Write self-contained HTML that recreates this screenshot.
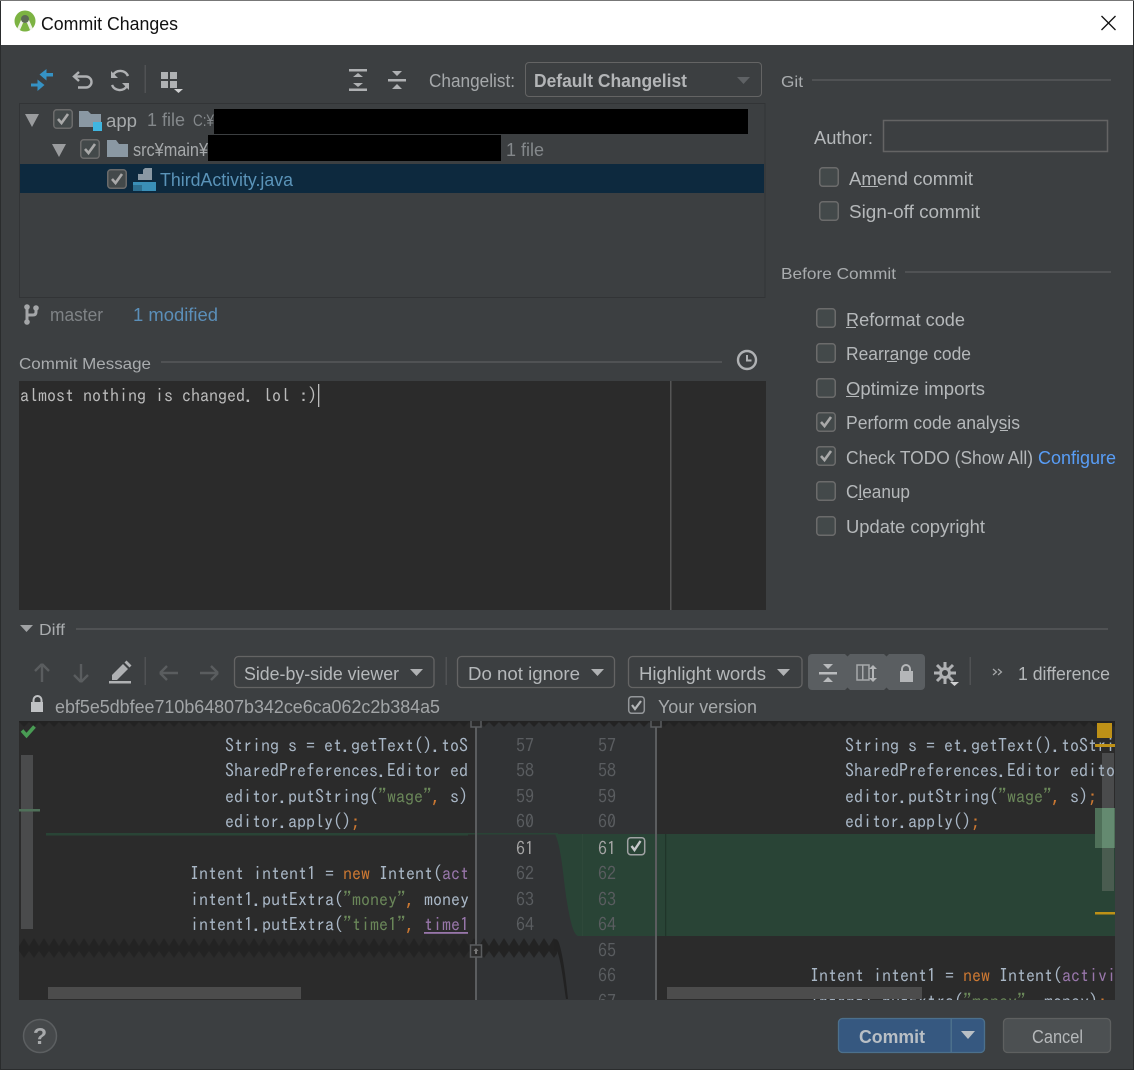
<!DOCTYPE html>
<html><head><meta charset="utf-8"><title>Commit Changes</title>
<style>
html,body{margin:0;padding:0;background:#3c3f41;width:1134px;height:1070px;overflow:hidden}
svg{display:block}
text{font-family:"Liberation Sans","Noto Sans CJK JP",sans-serif;font-size:18px;fill:#b5b8ba;white-space:pre}
.s{font-size:16px;fill:#a9acae}
.g{fill:#84888b}
.m{font-family:"IPAGothic","Liberation Mono",monospace;font-size:18px;fill:#a9b7c6}
.n{font-family:"IPAGothic","Liberation Mono",monospace;font-size:18px;fill:#5a5d60}
.o{fill:#cc7832}.v{fill:#6a8759}.p{fill:#9876aa}
.cb{fill:#43494a;stroke:#6b6b6b;stroke-width:1.5}
.ck{fill:none;stroke:#a9a9a9;stroke-width:2.6}
.ic{fill:#afb1b3}
.il{fill:none;stroke:#afb1b3;stroke-width:2.4}
.d{fill:#6e7275}
</style></head><body>
<svg width="1134" height="1070" viewBox="0 0 1134 1070" xmlns="http://www.w3.org/2000/svg">
<defs>
<pattern id="zt" x="19" y="721" width="10" height="7" patternUnits="userSpaceOnUse"><polygon points="0,0 10,0 10,1 5,6 0,1" fill="#232323"/></pattern>
<pattern id="zm" x="19" y="938" width="10" height="20" patternUnits="userSpaceOnUse"><polygon points="0,8 5,0 10,8 10,13 5,20 0,13" fill="#232323"/></pattern>
<clipPath id="cl"><rect x="19" y="721" width="449" height="279"/></clipPath>
<clipPath id="cr"><rect x="657" y="721" width="458" height="279"/></clipPath>
<clipPath id="cg"><rect x="476" y="721" width="180" height="279"/></clipPath>
<g id="c"><rect x="0.75" y="0.75" width="18.5" height="18.5" rx="3" class="cb"/></g>
<g id="cc"><rect x="0.75" y="0.75" width="18.5" height="18.5" rx="3" class="cb"/><path d="M5 10l3.5 4L15 5" class="ck"/></g>
</defs>

<rect width="1134" height="1070" fill="#3c3f41"/>
<!-- title bar -->
<rect x="0" y="0" width="1134" height="45" fill="#fff"/>
<circle cx="25" cy="21" r="10.5" fill="#7cb342"/>
<path d="M17 29l4-9h8l4 9-3 1-3-7h-4l-3 7z" fill="#eef3e6"/>
<circle cx="25" cy="19" r="4" fill="#5d6b55"/>
<text x="41" y="30" style="fill:#111" textLength="137" lengthAdjust="spacingAndGlyphs">Commit Changes</text>
<path d="M1101.500 16l14 14M1115.500 16l-14 14" stroke="#111" stroke-width="1.300" fill="none"/>

<!-- top toolbar -->
<path d="M53 73h-6.500v-4l-7 5.500 4 3.500 3 2.500v-4H53z" fill="#3592c4"/>
<path d="M31 83.500h6.500v-4l7 5.500-7 6v-4.500H31z" fill="#3592c4"/>
<path d="M79 72l-5 4.500 5 4.500M74 76.500h12a4.800 4.800 0 0 1 0 11h-8" class="il"/>
<path d="M128 76a8.500 8.500 0 0 0-15-1M112 85a8.500 8.500 0 0 0 15 1" class="il"/>
<path d="M111 71v7h7zM129 90v-7h-7z" class="ic"/>
<rect x="144.500" y="65" width="1.500" height="28" fill="#505254"/>
<path d="M161 72h7v7h-7zM170 72h7v7h-7zM161 81h7v7h-7zM170 81h7v7h-7z" class="ic"/>
<path d="M174 89h9l-4.500 4z" fill="#cfd0d1"/>
<path d="M349 69h18v2.500h-18zM349 88.500h18v2.500h-18zM358 73l5 4h-10zM358 87l5-4h-10z" class="ic"/>
<path d="M388 79h18v2.500h-18zM392 71h10l-5 5zM397 84l5 5h-10z" class="ic"/>
<text x="429" y="87" textLength="86" lengthAdjust="spacingAndGlyphs" style="fill:#a6a9ab">Changelist:</text>
<rect x="525.500" y="62.500" width="236" height="34" rx="3.500" fill="#3c3f41" stroke="#646464"/>
<text x="534" y="87" textLength="153" lengthAdjust="spacingAndGlyphs" style="font-weight:bold;fill:#b3b5b7">Default Changelist</text>
<path d="M737 77h13l-6.500 7z" fill="#5f6265"/>

<!-- tree -->
<rect x="19.500" y="103.500" width="745.500" height="194" fill="#3c3f41" stroke="#323436"/>
<rect x="20" y="164" width="744" height="29" fill="#0d293e"/>
<path d="M25 114h14l-7 13zM52 144h14l-7 13z" fill="#9a9c9e"/>
<use href="#cc" x="53" y="109"/><use href="#cc" x="80" y="139"/><use href="#cc" x="107" y="169"/>
<path d="M79 111h9l3 3h10v13H79z" fill="#8a98a3"/>
<rect x="93" y="122" width="9" height="9" fill="#40b6e0"/>
<path d="M107 140h9l3 4h9v13h-21z" fill="#8a98a3"/>
<path d="M145 168h7v12h-14v-6z" fill="#8a98a3"/><path d="M138 174l5-5v5z" fill="#0d293e"/>
<rect x="133" y="182" width="23" height="9" fill="#3a8fb7"/>
<rect x="133" y="185" width="9" height="6" fill="#2d6f90"/>
<text x="106" y="127" textLength="31" lengthAdjust="spacingAndGlyphs" style="fill:#a6a9ab">app</text>
<text x="147" y="126" textLength="38" lengthAdjust="spacingAndGlyphs" class="g">1 file</text>
<text x="193" y="126" textLength="21" lengthAdjust="spacingAndGlyphs" class="g" style="font-size:17px">C:¥</text>
<rect x="214" y="109" width="534" height="25" fill="#000"/>
<text x="133" y="156" textLength="75" lengthAdjust="spacingAndGlyphs" style="fill:#a6a9ab">src¥main¥</text>
<rect x="208" y="135" width="293" height="26" fill="#000"/>
<text x="506" y="156" textLength="38" lengthAdjust="spacingAndGlyphs" class="g">1 file</text>
<text x="160" y="186" textLength="133" lengthAdjust="spacingAndGlyphs" style="fill:#5a93b8">ThirdActivity.java</text>

<!-- status -->
<path d="M27 306v17M27 315h6q3 0 3-3v-4" fill="none" stroke="#a4a6a8" stroke-width="3"/>
<circle cx="27" cy="307" r="2.800" fill="#a4a6a8"/><circle cx="27" cy="322" r="2.800" fill="#a4a6a8"/><circle cx="36" cy="308" r="2.800" fill="#a4a6a8"/>
<text x="50" y="321" textLength="53" lengthAdjust="spacingAndGlyphs" style="fill:#7f8386">master</text>
<text x="133" y="321" textLength="85" lengthAdjust="spacingAndGlyphs" style="fill:#5b8fb9">1 modified</text>

<!-- commit message -->
<text x="19" y="369" textLength="132" lengthAdjust="spacingAndGlyphs" class="s">Commit Message</text>
<rect x="161" y="361" width="561" height="2" fill="#505254"/>
<circle cx="747" cy="360" r="9" fill="none" stroke="#afb1b3" stroke-width="2.400"/>
<path d="M747 355v5.500h4.500" fill="none" stroke="#afb1b3" stroke-width="2"/>
<rect x="19" y="381" width="747" height="229" fill="#2b2b2b"/>
<rect x="670" y="381" width="1.500" height="229" fill="#555"/>
<text x="20" y="402" class="m" style="fill:#bbb">almost nothing is changed. lol :)</text>
<rect x="318" y="384" width="1.300" height="23" fill="#bbb"/>

<!-- right panel -->
<text x="781" y="87" textLength="22" lengthAdjust="spacingAndGlyphs" class="s">Git</text>
<rect x="812" y="79" width="299" height="2" fill="#505254"/>
<text x="814" y="144" textLength="59" lengthAdjust="spacingAndGlyphs">Author:</text>
<rect x="883.500" y="120.500" width="224" height="31" fill="#3c3f41" stroke="#646464" stroke-width="1.500"/>
<use href="#c" x="819" y="167"/>
<text x="849" y="185" textLength="124" lengthAdjust="spacingAndGlyphs">Amend commit</text>
<rect x="861" y="186" width="17" height="1" fill="#b5b8ba"/>
<use href="#c" x="819" y="201"/>
<text x="849" y="218" textLength="131" lengthAdjust="spacingAndGlyphs">Sign-off commit</text>
<text x="781" y="279" textLength="115" lengthAdjust="spacingAndGlyphs" class="s">Before Commit</text>
<rect x="905" y="271" width="206" height="2" fill="#505254"/>

<use href="#c" x="816" y="308"/>
<text x="846" y="326" textLength="119" lengthAdjust="spacingAndGlyphs">Reformat code</text><rect x="846" y="327" width="10" height="1" fill="#b5b8ba"/>
<use href="#c" x="816" y="343"/>
<text x="846" y="360" textLength="125" lengthAdjust="spacingAndGlyphs">Rearrange code</text><rect x="887" y="361" width="10" height="1" fill="#b5b8ba"/>
<use href="#c" x="816" y="378"/>
<text x="846" y="395" textLength="139" lengthAdjust="spacingAndGlyphs">Optimize imports</text><rect x="846" y="396" width="13" height="1" fill="#b5b8ba"/>
<use href="#cc" x="816" y="412"/>
<text x="846" y="429" textLength="174" lengthAdjust="spacingAndGlyphs">Perform code analysis</text><rect x="1000" y="430" width="8" height="1" fill="#b5b8ba"/>
<use href="#cc" x="816" y="446"/>
<text x="846" y="464" textLength="187" lengthAdjust="spacingAndGlyphs">Check TODO (Show All)</text>
<text x="1038" y="464" textLength="78" lengthAdjust="spacingAndGlyphs" style="fill:#589df6">Configure</text>
<use href="#c" x="816" y="481"/>
<text x="846" y="498" textLength="64" lengthAdjust="spacingAndGlyphs">Cleanup</text><rect x="858" y="499" width="5" height="1" fill="#b5b8ba"/>
<use href="#c" x="816" y="516"/>
<text x="846" y="533" textLength="139" lengthAdjust="spacingAndGlyphs">Update copyright</text>

<!-- diff header -->
<path d="M20 625h13l-6.500 7z" fill="#a0a2a4"/>
<text x="39" y="635" textLength="26" lengthAdjust="spacingAndGlyphs" class="s">Diff</text>
<rect x="76" y="628" width="1032" height="2" fill="#505254"/>

<!-- diff toolbar -->
<path d="M42 664l-7 7M42 664l7 7M42 664v18" fill="none" stroke="#5a5d5f" stroke-width="2.400"/>
<path d="M81 682l-7-7M81 682l7-7M81 682v-18" fill="none" stroke="#5a5d5f" stroke-width="2.400"/>
<path d="M112 675l11-11 5 5-11 11h-5z" fill="#afb1b3"/><path d="M124.500 662.500l2-2 5 5-2 2z" fill="#afb1b3"/><rect x="109" y="681" width="22" height="2.500" fill="#afb1b3"/>
<rect x="144.500" y="657" width="1.500" height="28" fill="#505254"/>
<path d="M160 673h18M160 673l7-7M160 673l7 7" fill="none" stroke="#5a5d5f" stroke-width="2.400"/>
<path d="M200 673h18M218 673l-7-7M218 673l-7 7" fill="none" stroke="#5a5d5f" stroke-width="2.400"/>
<rect x="234.500" y="656.500" width="199.500" height="31" rx="4" fill="#3c3f41" stroke="#646464" stroke-width="1.300"/>
<text x="244" y="680" textLength="155" lengthAdjust="spacingAndGlyphs">Side-by-side viewer</text>
<path d="M410 669h13l-6.500 7z" fill="#afb1b3"/>
<rect x="445.500" y="657" width="1.500" height="28" fill="#505254"/>
<rect x="457.500" y="656.500" width="157" height="31" rx="4" fill="#3c3f41" stroke="#646464" stroke-width="1.300"/>
<text x="468" y="680" textLength="112" lengthAdjust="spacingAndGlyphs">Do not ignore</text>
<path d="M591 669h13l-6.500 7z" fill="#afb1b3"/>
<rect x="628.500" y="656.500" width="173.500" height="31" rx="4" fill="#3c3f41" stroke="#646464" stroke-width="1.300"/>
<text x="639" y="680" textLength="127" lengthAdjust="spacingAndGlyphs">Highlight words</text>
<path d="M777 669h13l-6.500 7z" fill="#afb1b3"/>
<rect x="808" y="654" width="117" height="36" rx="4" fill="#5a5e61"/>
<path d="M845 654h5l-2.500 2.500zM884 654h5l-2.500 2.500zM845 690h5l-2.500-2.500zM884 690h5l-2.500-2.500z" fill="#3c3f41"/>
<path d="M819 672h18v2.500h-18zM823 664h10l-5 5zM828 677l5 5h-10z" fill="#b9bbbd"/>
<rect x="857" y="665" width="12" height="15" fill="none" stroke="#a6a8aa" stroke-width="1.500"/><rect x="862" y="665" width="1.500" height="15" fill="#a6a8aa"/>
<path d="M873 665l-4 4h3v9h-3l4 4 4-4h-3v-9h3z" fill="#b4b6b8"/>
<path d="M902 672v-3a4 4 0 0 1 8 0v3" fill="none" stroke="#b4b6b8" stroke-width="2"/><rect x="900" y="671" width="13" height="11" fill="#b4b6b8"/>
<path d="M945 662v22M934 673h22M937 665l16 16M953 665l-16 16" stroke="#afb1b3" stroke-width="3"/>
<circle cx="945" cy="673" r="6" fill="#afb1b3"/><circle cx="945" cy="673" r="3" fill="#3c3f41"/>
<path d="M950 682h9l-4.500 4z" fill="#d0d1d2"/>
<rect x="969.500" y="657" width="1.500" height="28" fill="#505254"/>
<path d="M993 669l3.500 3-3.500 3M998 669l3.500 3-3.500 3" fill="none" stroke="#a6a8aa" stroke-width="1.200"/>
<text x="1018" y="680" textLength="92" lengthAdjust="spacingAndGlyphs">1 difference</text>

<path d="M33.500 703v-3a4 4 0 0 1 8 0v3" fill="none" stroke="#c0c2c4" stroke-width="2"/><rect x="31" y="702" width="12" height="10" fill="#c0c2c4"/>
<text x="55" y="713" textLength="385" lengthAdjust="spacingAndGlyphs" style="fill:#a2a5a7">ebf5e5dbfee710b64807b342ce6ca062c2b384a5</text>
<rect x="628.700" y="696.700" width="15.600" height="16.600" rx="3" fill="none" stroke="#94979a" stroke-width="1.500"/><path d="M632 705l3 4 6-8" class="ck" style="stroke:#b4b6b8;stroke-width:2.200"/>
<text x="658" y="713" textLength="99" lengthAdjust="spacingAndGlyphs" style="fill:#a6a9ab">Your version</text>

<!-- diff editors -->
<rect x="19" y="721" width="1096" height="279" fill="#2b2b2b"/>
<rect x="476" y="721" width="180" height="279" fill="#313335"/>
<rect x="19" y="721" width="1096" height="7" fill="url(#zt)"/>
<rect x="19" y="938" width="538" height="20" fill="url(#zm)"/>

<!-- green -->
<rect x="46" y="833" width="422" height="2.500" fill="#294436"/>
<rect x="468" y="833" width="90" height="1.500" fill="#294436"/>
<path d="M555 834h560v102H578c-5-2-8-15-12-40-3-22-5-50-11-62z" fill="#294436"/>
<rect x="665" y="834" width="1.300" height="102" fill="#20352a"/>
<rect x="582" y="834" width="0.800" height="102" fill="#2f4a3c"/>
<path d="M554 940c2-2 4 0 5 3 4 12 7 36 9 56h-2c-3-20-5-38-9-48l-3-1z" fill="#222"/>

<!-- markers beneath text -->
<rect x="21" y="755" width="12" height="174" fill="#4a4b4c"/>
<rect x="19" y="809" width="21" height="2.500" fill="#4f7059"/>
<rect x="1102" y="753" width="12" height="137" fill="#4a4b4c"/>
<rect x="1095" y="808" width="20" height="40" fill="#4f7059"/>
<rect x="1102" y="808" width="12" height="40" fill="#648a70"/>
<rect x="1102" y="848" width="12" height="43" fill="#4a5c50"/>

<!-- left code -->
<g clip-path="url(#cl)">
<text x="225" y="752" class="m">String s = et.getText().toS</text>
<text x="225" y="777" class="m">SharedPreferences.Editor ed</text>
<text x="225" y="803" class="m">editor.putString(<tspan class="v">"wage"</tspan><tspan class="o">,</tspan> s)</text>
<text x="225" y="828" class="m">editor.apply()<tspan class="o">;</tspan></text>
<text x="190" y="880" class="m">Intent intent1 = <tspan class="o">new</tspan> Intent(<tspan class="p">act</tspan></text>
<text x="190" y="906" class="m">intent1.putExtra(<tspan class="v">"money"</tspan><tspan class="o">,</tspan> money</text>
<text x="190" y="931" class="m">intent1.putExtra(<tspan class="v">"time1"</tspan><tspan class="o">,</tspan> <tspan class="p" text-decoration="underline">time1</tspan></text>
</g>
<!-- gutter numbers -->
<g clip-path="url(#cg)">
<text x="516" y="752" class="n">57</text><text x="598" y="752" class="n">57</text>
<text x="516" y="777" class="n">58</text><text x="598" y="777" class="n">58</text>
<text x="516" y="803" class="n">59</text><text x="598" y="803" class="n">59</text>
<text x="516" y="828" class="n">60</text><text x="598" y="828" class="n">60</text>
<text x="516" y="855" class="n" style="fill:#a4a4a4">61</text><text x="598" y="855" class="n" style="fill:#a4a4a4">61</text>
<text x="516" y="880" class="n">62</text><text x="598" y="880" class="n">62</text>
<text x="516" y="906" class="n">63</text><text x="598" y="906" class="n">63</text>
<text x="516" y="931" class="n">64</text><text x="598" y="931" class="n">64</text>
<text x="598" y="957" class="n">65</text>
<text x="598" y="982" class="n">66</text>
<text x="598" y="1008" class="n">67</text>
</g>
<rect x="627.700" y="837.700" width="17" height="17" rx="3" fill="none" stroke="#a0a2a4" stroke-width="1.500"/>
<path d="M631.500 846l3 4 6-9" class="ck" style="stroke:#c6c8ca;stroke-width:2.400"/>

<!-- right code -->
<g clip-path="url(#cr)">
<text x="845" y="752" class="m">String s = et.getText().toStri</text>
<text x="845" y="777" class="m">SharedPreferences.Editor edito</text>
<text x="845" y="803" class="m">editor.putString(<tspan class="v">"wage"</tspan><tspan class="o">,</tspan> s)<tspan class="o">;</tspan></text>
<text x="845" y="828" class="m">editor.apply()<tspan class="o">;</tspan></text>
<text x="810" y="982" class="m">Intent intent1 = <tspan class="o">new</tspan> Intent(<tspan class="p">activi</tspan></text>
<text x="810" y="1008" class="m">intent1.putExtra(<tspan class="v">"money"</tspan><tspan class="o">,</tspan> money)<tspan class="o">;</tspan></text>
</g>

<!-- dividers and fold boxes -->
<rect x="475" y="721" width="2" height="279" fill="#5b5d5f"/>
<rect x="655" y="721" width="2" height="279" fill="#5b5d5f"/>
<path d="M471 721v6h10v-6M651 721v6h10v-6" fill="#2b2b2b" stroke="#5b5d5f" stroke-width="1.500"/>
<rect x="470.500" y="945" width="11" height="12" fill="#2b2b2b" stroke="#5b5d5f" stroke-width="1.500"/>
<path d="M476 948l2.500 3h-1.500v3h-2v-3h-1.500z" fill="#777"/>

<!-- top markers -->
<path d="M22 730.500l4.500 5 8-9" fill="none" stroke="#499c54" stroke-width="3.600"/>
<rect x="1097" y="723" width="15" height="15" fill="#be9117"/>
<rect x="1095" y="744" width="20" height="3" fill="#be9117"/>
<rect x="1095" y="912" width="20" height="2.500" fill="#be9117"/>
<rect x="48" y="987" width="253" height="12" fill="#4c4c4c"/>
<rect x="667" y="987" width="255" height="12" fill="#4c4c4c"/>

<!-- bottom -->
<circle cx="40" cy="1036" r="16.500" fill="#46494b" stroke="#5c5f61" stroke-width="1.500"/>
<text x="33" y="1044" style="font-size:23px;font-weight:bold;fill:#a8aaac">?</text>
<rect x="838.500" y="1018.500" width="146" height="34" rx="4" fill="#365880" stroke="#4c708c" stroke-width="1.300"/>
<rect x="950.500" y="1019" width="1.500" height="33" fill="#4c708c"/>
<text x="859" y="1043" textLength="66" lengthAdjust="spacingAndGlyphs" style="font-weight:bold;fill:#b9bfc5">Commit</text>
<path d="M961 1031h14l-7 8z" fill="#b9bfc5"/>
<rect x="1003.500" y="1018.500" width="107" height="34" rx="4" fill="#4c5052" stroke="#5e6060" stroke-width="1.300"/>
<text x="1032" y="1043" textLength="51" lengthAdjust="spacingAndGlyphs">Cancel</text>

<!-- window edges -->
<rect x="0" y="0" width="1" height="1070" fill="#2a2c2d"/>
<rect x="1133" y="0" width="1" height="1070" fill="#2a2c2d"/>
<rect x="0" y="1069" width="1134" height="1" fill="#2a2c2d"/>
<rect x="0" y="0" width="1134" height="1" fill="#777"/>
</svg>
</body></html>
